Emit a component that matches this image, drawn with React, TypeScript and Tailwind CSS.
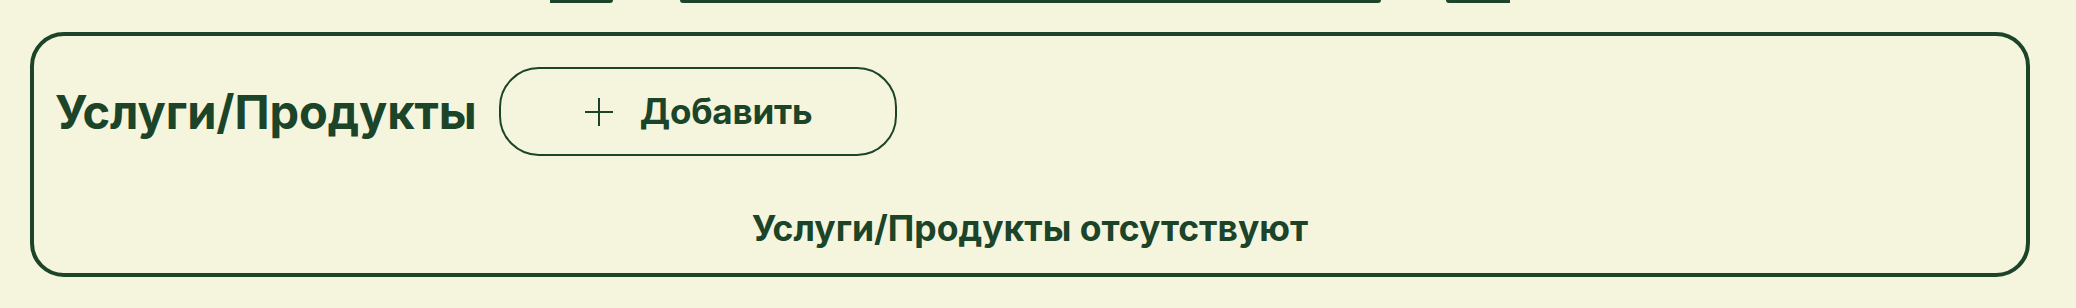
import React from 'react';

const GREEN = 'text-[#1b4428]';

// Plus glyph used in the add button
const PlusIcon = () => (
  <svg width="28" height="28" viewBox="0 0 28 28" fill="none" className="shrink-0">
    <path d="M14 0V28M0 14H28" stroke="#1b4428" strokeWidth="2" />
  </svg>
);

export default function App() {
  return (
    <div
      className="min-h-[308px] w-full bg-[#f5f5de]"
      style={{ fontFamily: 'Inter, "Noto Sans", sans-serif' }}
    >
      {/* Bottoms of the controls from the section above */}
      <div className="flex h-[3px]">
        <div className="ml-[550px] w-[63px] bg-[#1b4428] rounded-br-[3px]"></div>
        <div className="ml-[67px] w-[701px] bg-[#1b4428] rounded-b-[3px]"></div>
        <div className="ml-[65px] w-[64px] bg-[#1b4428] rounded-bl-[3px]"></div>
      </div>

      <section className="ml-[30px] mt-[29px] w-[2000px] rounded-[34px] border-4 border-[#1b4428] px-[21px] pt-[31px] pb-[22px]">
        <div className="flex items-center gap-[22px]">
          <h2 className={`text-[47px] font-bold leading-none tracking-[-0.1px] ${GREEN}`}>
            Услуги/Продукты
          </h2>
          <button
            type="button"
            className={`flex h-[89px] w-[398px] items-center justify-center gap-[27px] rounded-[40px] border-2 border-[#1b4428] pl-[2px] ${GREEN}`}
          >
            <PlusIcon />
            <span className="text-[35px] font-bold leading-none tracking-[-0.2px]">Добавить</span>
          </button>
        </div>

        <p className={`mt-[51px] text-center text-[35.5px] font-bold leading-[44px] ${GREEN}`}>
          Услуги/Продукты отсутствуют
        </p>
      </section>
    </div>
  );
}
